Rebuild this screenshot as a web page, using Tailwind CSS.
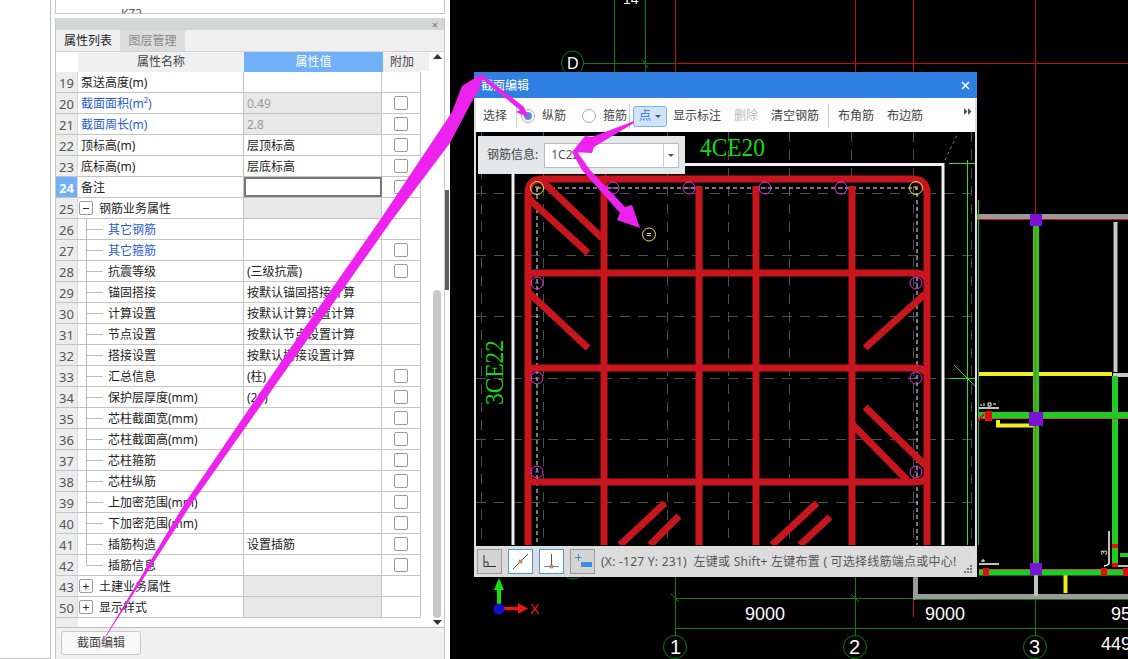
<!DOCTYPE html>
<html lang="zh-CN">
<head>
  <meta charset="UTF-8" />
  <title>截面编辑</title>
  <script src="https://cdn.jsdelivr.net/npm/@tailwindcss/browser@4"></script>
</head>
<body class="bg-black">
  <div class="relative w-[1128px] h-[659px] overflow-hidden flex text-[12px] text-[#222] font-['Noto_Sans','Noto_Sans_CJK_SC',sans-serif]">

    <!-- left white strip + property panel -->
    <div class="w-[450px] h-full bg-white flex shrink-0 relative">
      <div class="w-[51px] h-full border-r border-b border-[#c0c0c0] shrink-0"></div>
      <div class="w-[390px] ml-[4px] flex flex-col h-full shrink-0">
        <div class="h-[14px] border-x border-b border-[#c8c8c8] overflow-hidden relative">
          <span class="block pl-[65px] pt-[8px] leading-[12px] text-[#555]">KZ3</span>
        </div>
        <div class="h-[4px]"></div>
        <div class="flex flex-col flex-1 border-x border-[#c8c8c8] bg-[#f0f0f0]">
          <div class="h-[12px] bg-[#d3d5d7] flex justify-end items-center pr-[6px] text-[#777] text-[11px] leading-none">×</div>
          <div class="h-[22px] flex border-b border-[#d0d0d0]">
            <div class="w-[64px] flex items-center justify-center">属性列表</div>
            <div class="w-[65px] flex items-center justify-center bg-[#dcdcdc] text-[#8a8a8a]">图层管理</div>
          </div>
          <div class="h-[576px] bg-white border-b border-[#bdbdbd] flex relative">
            <div class="w-[365px] flex flex-col shrink-0">
              <div class="h-[20px] flex bg-[#f0f0f0] shrink-0">
                <div class="w-[22px] bg-white"></div>
                <div class="w-[166px] flex items-center justify-center text-[#444]">属性名称</div>
                <div class="w-[139px] flex items-center justify-center bg-[#6fb0f8] text-white">属性值</div>
                <div class="w-[38px] flex items-center justify-center text-[#444]">附加</div>
              </div>
              <div id="rows" class="flex flex-col"></div>
              <div class="flex-1 w-[22px] bg-[#ececec]"></div>
            </div>
            <div class="w-[8px] bg-[#f0f0f0] h-[19px]"></div>
            <div class="flex-1 flex flex-col items-center pt-[2px] pb-[2px] pl-[1px]">
              <svg width="9" height="5" viewBox="0 0 9 5"><path d="M0 5 4.500 0 9 5z" fill="#333"/></svg>
              <div class="flex-1"></div>
              <div class="w-[8px] h-[328px] bg-[#c8c8c8] rounded-[4px] mb-[2px]"></div>
              <svg width="9" height="5" viewBox="0 0 9 5"><path d="M0 0 4.500 5 9 0z" fill="#333"/></svg>
            </div>
          </div>
          <div class="flex-1 pl-[5px] pt-[3px]">
            <button class="w-[80px] h-[24px] bg-[#f8f8f8] border border-[#c8c8c8] rounded-[3px] text-[#444] text-[12px]">截面编辑</button>
          </div>
        </div>
      </div>
      <!-- dock handle -->
      <div class="absolute left-[445px] top-[190px] w-[4px] h-[100px] bg-[#5c5c5c]"></div>
    </div>

    <!-- CAD canvas behind the dialog -->
    <div class="flex-1 h-full bg-black">
      <svg class="block" width="678" height="659" viewBox="450 0 678 659">
        <g stroke="#0b7d0b" stroke-width="1" fill="none">
          <path d="M614.500 0V72M645.500 0V72M584 63.500H675"/>
          <path d="M675.500 577V636M855.500 577V636M1035.500 575V636M675 598.500H1128M675 628.500H1128"/>
          <ellipse cx="572.500" cy="63" rx="11" ry="12"/>
          <circle cx="573" cy="567" r="12"/>
          <circle cx="675" cy="647" r="11.500"/>
          <circle cx="855" cy="647" r="11.500"/>
          <circle cx="1035" cy="647" r="11.500"/>
          <path d="M642 59l6 9M671 594l8 8M851 594l8 8"/>
        </g>
        <g stroke="#c80d0d" stroke-width="1" fill="none">
          <path d="M675.500 0V72M855.500 0V72M913.500 0V72M1035.500 0V214M675 63.500H1128"/>
          <path d="M913.500 600V617"/>
        </g>

        <!-- walls -->
        <path d="M1115.500 222V372" stroke="#c8c8c8" stroke-width="4"/>
        <path d="M1113 375H1128" stroke="#c8c8c8" stroke-width="4"/>
        <path d="M977 216.500H1128" stroke="#9a9a9a" stroke-width="5"/>
        <path d="M977 219.500H1128" stroke="#d81818" stroke-width="1"/>
        <path d="M915 596.500H1128M915.500 577V600" stroke="#9a9a9a" stroke-width="5"/>
        <path d="M915 599.500H1128" stroke="#0b7d0b" stroke-width="1"/>
        <path d="M1036 575V596" stroke="#b8c8b8" stroke-width="4"/>
        <path d="M979 374H1112" stroke="#f0f020" stroke-width="4"/>
        <path d="M998 420V425.500H1033" stroke="#f0f020" stroke-width="4" fill="none"/>
        <path d="M1065.500 575V593" stroke="#f0f020" stroke-width="4"/>

        <!-- beams -->
        <g stroke="#25c925">
          <path d="M979 415H1128" stroke-width="6"/>
          <path d="M979 572.500H1128" stroke-width="6"/>
          <path d="M1036 226V563" stroke-width="6"/>
          <path d="M1115 376V566" stroke-width="6"/>
          <path d="M1120 555H1128" stroke-width="4"/>
        </g>
        <path d="M979 418.500H1128M979 569.500H1128M1035.500 226V563" stroke="#a8641c" stroke-width="1"/>
        <path d="M978.500 200V545" stroke="#25c925" stroke-width="1"/>

        <!-- columns -->
        <g fill="#e01010">
          <rect x="985" y="411" width="7" height="10"/>
          <rect x="983" y="568" width="6" height="8"/>
          <rect x="1101" y="568" width="6" height="8"/>
          <rect x="1123" y="568" width="5" height="8"/>
          <rect x="1112" y="544" width="6" height="4"/>
          <rect x="1112" y="563" width="6" height="4"/>
        </g>
        <path d="M978 421l6-7" stroke="#e01010" stroke-width="2"/>
        <g fill="#7a12d8">
          <rect x="1030" y="214" width="12" height="12"/>
          <rect x="1029" y="412" width="14" height="14"/>
          <rect x="1030" y="563" width="12" height="12"/>
        </g>

        <!-- little annotations -->
        <path d="M979 408H999M979 564H999M1109 531V562Q1110 565 1104 566" stroke="#fff" stroke-width="1.500" fill="none"/>
        <path d="M1118 566H1128" stroke="#fff" stroke-width="1.500"/>
        <path d="M980 405h2M984 403v3M988 403h3v3h-3zM993 404h3M981 561h4M983 559v3" stroke="#fff" stroke-width="1" fill="none"/>

        <g fill="#fff" font-family="Liberation Sans, sans-serif">
          <text x="623" y="4" font-size="14">14</text>
          <text x="567" y="69" font-size="16">D</text>
          <text x="745" y="620" font-size="18">9000</text>
          <text x="925" y="620" font-size="18">9000</text>
          <text x="1111" y="620" font-size="18">95</text>
          <text x="1101" y="650" font-size="18">449</text>
          <text x="670" y="654" font-size="20">1</text>
          <text x="849" y="654" font-size="20">2</text>
          <text x="1029" y="654" font-size="20">3</text>
          <text transform="translate(1107 555) rotate(-90)" font-size="9">3</text>
        </g>

        <!-- axis gizmo -->
        <path d="M499 590V606" stroke="#12e012" stroke-width="4"/>
        <path d="M494 590 499 578l5 12z" fill="#12e012"/>
        <path d="M503 608.500H520" stroke="#e81818" stroke-width="3.500"/>
        <path d="M518 603l10 5.500-10 5.500z" fill="#e81818"/>
        <circle cx="499" cy="609" r="5.500" fill="#1010c8"/>
        <text x="530" y="614" font-size="14" fill="#e81818" font-family="Liberation Sans, sans-serif">X</text>
      </svg>
    </div>

    <!-- dialog -->
    <div class="absolute left-[474px] top-[72px] w-[503px] h-[505px] flex flex-col bg-[#dcdcdc] border-x-2 border-[#dedede] shadow-[0_0_2px_rgba(0,0,0,0.4)]">
      <div class="h-[26px] -mx-[2px] bg-[#2f7fe0] flex items-center justify-between pl-[7px] pr-[7px] pt-[2px] text-white shrink-0">
        <span>截面编辑</span>
        <svg class="-mt-[2px]" width="9" height="9" viewBox="0 0 9 9"><path d="M1 1l7 7M8 1 1 8" stroke="#fff" stroke-width="1.500"/></svg>
      </div>
      <div class="h-[34px] bg-white flex items-center pt-[2px] text-[#444] shrink-0 relative">
        <span class="ml-[7px]">选择</span>
        <div class="w-px h-[24px] bg-[#ccc] ml-[9px]"></div>
        <span class="w-[14px] h-[14px] ml-[4px] rounded-full border border-[#aaa] bg-white flex items-center justify-center"><span class="w-[8px] h-[8px] rounded-full bg-[#4d8fe0]"></span></span>
        <span class="ml-[7px]">纵筋</span>
        <span class="w-[14px] h-[14px] ml-[16px] rounded-full border border-[#aaa] bg-white"></span>
        <span class="ml-[7px]">箍筋</span>
        <div class="w-px h-[24px] bg-[#ccc] ml-[2px]"></div>
        <div class="w-[34px] h-[21px] ml-[3px] bg-[#cfe3fa] border border-[#7ab2ea] rounded-[3px] flex items-center justify-between pl-[5px] pr-[5px] text-[#2a78d8]">
          <span>点</span>
          <svg width="6" height="3" viewBox="0 0 6 3"><path d="M0 0h6L3 3z" fill="#555"/></svg>
        </div>
        <span class="ml-[6px]">显示标注</span>
        <span class="ml-[13px] text-[#bbb]">删除</span>
        <span class="ml-[13px]">清空钢筋</span>
        <div class="w-px h-[24px] bg-[#ccc] ml-[9px]"></div>
        <span class="ml-[9px]">布角筋</span>
        <span class="ml-[13px]">布边筋</span>
        <svg class="ml-[41px] -mt-[10px]" width="8" height="7" viewBox="0 0 8 7"><path d="M0 0l3.500 3.500L0 7zM4 0l3.500 3.500L4 7z" fill="#555"/></svg>
      </div>

      <div class="relative flex-1 bg-black overflow-hidden">
        <svg class="block" width="499" height="413" viewBox="476 132 499 413">
          <!-- grid -->
          <g stroke="#4e4e4e" stroke-width="1" stroke-dasharray="10 8" fill="none">
            <path d="M481.500 132V545M543.500 132V545M605.500 132V545M667.500 132V545M728.500 132V545M789.500 132V545M851.500 132V545M913.500 132V545M971.500 132V545"/>
            <path d="M476 193.500H975M476 255.500H975M476 316.500H975M476 378.500H975M476 439.500H975M476 502.500H975"/>
          </g>
          <path d="M513 545V164.500H943V545" fill="none" stroke="#f2f2f2" stroke-width="3"/>
          <!-- inner dashed line -->
          <path d="M537 188H917V545M537 188V545" fill="none" stroke="#f0f0f0" stroke-width="1" stroke-dasharray="4 3"/>
          <!-- stirrups -->
          <g fill="none" stroke="#c8161e" stroke-width="7">
            <path d="M528 545V194Q528 179 543 179H912Q927 179 927 194V545"/>
            <path d="M604 179V545M699 186V545M756 186V545M852 186V545"/>
            <path d="M528 279Q529 273 534 273H917Q922 273 926 278"/>
            <path d="M528 374Q529 368 534 368H917Q922 368 926 373"/>
            <path d="M528 476Q529 482 534 482H917Q922 482 926 478"/>
            <path d="M541 180 602 238M528 198 588 253M528 292 588 348M925 294 865 348M865 407 925 465M853 425 907 480"/>
            <path d="M817 503 772 545M830 517 800 545M665 503 620 545M679 516 650 545"/>
          </g>
          <!-- bars -->
          <g fill="none" stroke-width="1">
            <g stroke="#f0e050">
              <circle cx="537" cy="188" r="6.500"/>
              <circle cx="916" cy="188" r="6.500"/>
              <circle cx="649" cy="234.500" r="6.500"/>
              <path d="M535 187h4M536 189h2M914 187h4M915 189h2M647 233.500h4M647 235.500h4"/>
            </g>
            <g stroke="#d838e8">
              <circle cx="613" cy="188" r="6"/>
              <circle cx="689" cy="188" r="6"/>
              <circle cx="765" cy="188" r="6"/>
              <circle cx="841" cy="188" r="6"/>
              <circle cx="537" cy="283" r="6"/>
              <circle cx="537" cy="378" r="6"/>
              <circle cx="537" cy="472" r="6"/>
              <circle cx="916" cy="283" r="6"/>
              <circle cx="916" cy="378" r="6"/>
              <circle cx="916" cy="472" r="6"/>
              <path d="M611 188h4M687 188h4M763 188h4M839 188h4M535 283h4M535 378h4M535 472h4M914 283h4M914 378h4M914 472h4"/>
            </g>
          </g>
          <!-- right side axis seen through the dialog -->
          <path d="M967.500 160V545" stroke="#25e025" stroke-width="1"/>
          <path d="M949 163.500H976M949 378.500H976M954 365 976 387" stroke="#25e025" stroke-width="1" fill="none"/>
          <path d="M945 160 958 133" stroke="#777" stroke-width="1" stroke-dasharray="3 3"/>
          <g fill="#18d818" font-family="Liberation Serif, serif">
            <text x="700" y="156" font-size="25" textLength="65" lengthAdjust="spacingAndGlyphs">4CE20</text>
            <text transform="translate(503 405) rotate(-90)" font-size="25" textLength="65" lengthAdjust="spacingAndGlyphs">3CE22</text>
          </g>
        </svg>

        <!-- rebar info floating box -->
        <div class="absolute left-[2px] top-[4px] w-[207px] h-[38px] bg-[#e4e8ea] flex items-center pl-[9px] text-[#444]">
          <span>钢筋信息:</span>
          <div class="ml-[6px] w-[135px] h-[25px] bg-white border border-[#bbb] flex items-center">
            <span class="flex-1 pl-[6px] text-[#555]">1C22</span>
            <div class="w-[15px] h-full border-l border-[#ccc] flex items-center justify-center">
              <svg width="6" height="3" viewBox="0 0 6 3"><path d="M0 0h6L3 3z" fill="#555"/></svg>
            </div>
          </div>
        </div>
      </div>

      <!-- status bar -->
      <div class="h-[31px] bg-[#dcdcdc] flex items-center pl-[1px] text-[#555] shrink-0 relative">
        <div class="w-[25px] h-[25px] bg-[#d4d4d4] border border-[#999] flex items-center justify-center">
          <svg width="15" height="15" viewBox="0 0 15 15"><path d="M2 1V12.500H14M2 8H6V12" fill="none" stroke="#333"/></svg>
        </div>
        <div class="w-[25px] h-[25px] ml-[6px] bg-white border border-[#4d98e8] flex items-center justify-center">
          <svg width="19" height="19" viewBox="0 0 19 19"><path d="M2 17 17 2" stroke="#555"/><rect x="8" y="8" width="3" height="3" fill="#d89060" stroke="#b06a30" stroke-width=".5"/></svg>
        </div>
        <div class="w-[25px] h-[25px] ml-[6px] bg-white border border-[#4d98e8] flex items-center justify-center">
          <svg width="19" height="19" viewBox="0 0 19 19"><path d="M9.500 2V14" stroke="#555"/><path d="M2 14.500H17" stroke="#3c8ce0"/><rect x="8" y="13" width="3" height="3" fill="#d89060" stroke="#b06a30" stroke-width=".5"/></svg>
        </div>
        <div class="w-[25px] h-[25px] ml-[6px] bg-[#d4d4d4] border border-[#999] flex items-center justify-center">
          <svg width="19" height="19" viewBox="0 0 19 19"><path d="M2 5.500H9M5.500 2V9" stroke="#3c8ce0"/><rect x="8" y="10" width="11" height="5" fill="#3c8ce0"/></svg>
        </div>
        <span class="ml-[6px] w-[356px] whitespace-nowrap overflow-hidden tracking-[0.25px]">(X: -127 Y: 231)&nbsp; 左键或 Shift+ 左键布置 ( 可选择线筋端点或中心!</span>
        <svg class="absolute right-[2px] bottom-[3px]" width="9" height="9" viewBox="0 0 9 9"><path d="M6 0h2v2H6zM3 3h2v2H3zM6 3h2v2H6zM0 6h2v2H0zM3 6h2v2H3zM6 6h2v2H6z" fill="#777"/></svg>
      </div>
    </div>

    <!-- magenta annotation arrows drawn over the screenshot -->
    <svg class="absolute left-0 top-0" width="1128" height="659" viewBox="0 0 1128 659">
      <g fill="#ee22ee">
        <path d="M96 652 185 503 287 353 380 220 452 112 462 86 483 73 480 88 471 103 450 143 392 220 298 353 192 503Z"/>
        <path d="M481 76 484 76 524 107 523 105 529 118 516 112 520 110 482 79Z"/>
        <path d="M634 121 592 137 585 136 572 152 592 153 594 147 634 123Z"/>
        <path d="M572 152 582 170 620 213 617 220 640 228 632 205 625 207 590 170 576 150Z"/>
      </g>
    </svg>
  </div>

  <script>
    // [no, name, value, kind, checkbox]
    const rows = [
      [19, "泵送高度(m)", "", "", false],
      [20, "截面面积(m²)", "0.49", "ro", true],
      [21, "截面周长(m)", "2.8", "ro", true],
      [22, "顶标高(m)", "层顶标高", "", true],
      [23, "底标高(m)", "层底标高", "", true],
      [24, "备注", "", "sel", true],
      [25, "钢筋业务属性", "", "minus", false],
      [26, "其它钢筋", "", "treeblue", false],
      [27, "其它箍筋", "", "treeblue", true],
      [28, "抗震等级", "(三级抗震)", "tree", true],
      [29, "锚固搭接", "按默认锚固搭接计算", "tree", false],
      [30, "计算设置", "按默认计算设置计算", "tree", false],
      [31, "节点设置", "按默认节点设置计算", "tree", false],
      [32, "搭接设置", "按默认搭接设置计算", "tree", false],
      [33, "汇总信息", "(柱)", "tree", true],
      [34, "保护层厚度(mm)", "(20)", "tree", true],
      [35, "芯柱截面宽(mm)", "", "tree", true],
      [36, "芯柱截面高(mm)", "", "tree", true],
      [37, "芯柱箍筋", "", "tree", true],
      [38, "芯柱纵筋", "", "tree", true],
      [39, "上加密范围(mm)", "", "tree", true],
      [40, "下加密范围(mm)", "", "tree", true],
      [41, "插筋构造", "设置插筋", "tree", true],
      [42, "插筋信息", "", "treeend", true],
      [43, "土建业务属性", "", "plus", false],
      [50, "显示样式", "", "plus", false],
    ];

    const box = (d) => `<span class="w-[14px] h-[14px] ml-[1px] mr-[6px] -mt-[2px] border border-[#999] rounded-[2px] shrink-0 bg-white"><svg class="block" width="12" height="12" viewBox="0 0 12 12"><path d="${d}" stroke="#333"/></svg></span>`;

    document.getElementById("rows").innerHTML = rows.map(([no, name, value, kind, check]) => {
      const isTree = kind.startsWith("tree");
      const isGroup = kind === "minus" || kind === "plus";
      let nameCell = `<span class="pl-[3px]">${name}</span>`;
      if (kind === "ro") nameCell = `<span class="pl-[3px] text-[#2a5cd0]">${name}</span>`;
      if (kind === "minus") nameCell = box("M3 6.500H9") + `<span>${name}</span>`;
      if (kind === "plus") nameCell = box("M3 6.500H9M6 3.500V9.500") + `<span>${name}</span>`;
      if (isTree) {
        const vert = kind === "treeend"
          ? `<span class="absolute left-[8px] top-0 h-[11px] w-px bg-[#bbb]"></span>`
          : `<span class="absolute left-[8px] top-0 h-[21px] w-px bg-[#bbb]"></span>`;
        const color = kind === "treeblue" ? "text-[#2a5cd0]" : "";
        nameCell = vert + `<span class="w-[17px] h-px bg-[#bbb] ml-[8px] mr-[5px] -mt-[2px] shrink-0"></span><span class="${color}">${name}</span>`;
      }
      const numCls = kind === "sel"
        ? "bg-[#6fb0f8] text-white font-bold"
        : "bg-[#ececec] text-[#555]";
      let valCls = "pl-[3px] pt-[2px] border-r border-[#c4c4c4]";
      if (kind === "ro") valCls = "pl-[3px] pt-[2px] border-r border-[#c4c4c4] bg-[#e8e8e8] text-[#999]";
      if (isGroup) valCls = "pl-[3px] border-r border-[#c4c4c4] bg-[#e8e8e8]";
      if (kind === "sel") valCls = "pl-[3px] border-2 border-[#777]";
      return `<div class="h-[21px] flex border-b border-[#c4c4c4] leading-none">
        <div class="w-[22px] flex items-center justify-center pt-[2px] text-[13px] border-r border-[#d8d8d8] ${numCls}">${no}</div>
        <div class="relative w-[166px] flex items-center pt-[2px] whitespace-nowrap border-r border-[#c4c4c4]">${nameCell}</div>
        <div class="w-[138px] flex items-center ${valCls}">${value}</div>
        <div class="w-[39px] flex items-center justify-center border-r border-[#c4c4c4]">${check ? '<span class="w-[14px] h-[14px] border border-[#999] rounded-[2px] bg-white"></span>' : ""}</div>
      </div>`;
    }).join("");
  </script>
</body>
</html>
